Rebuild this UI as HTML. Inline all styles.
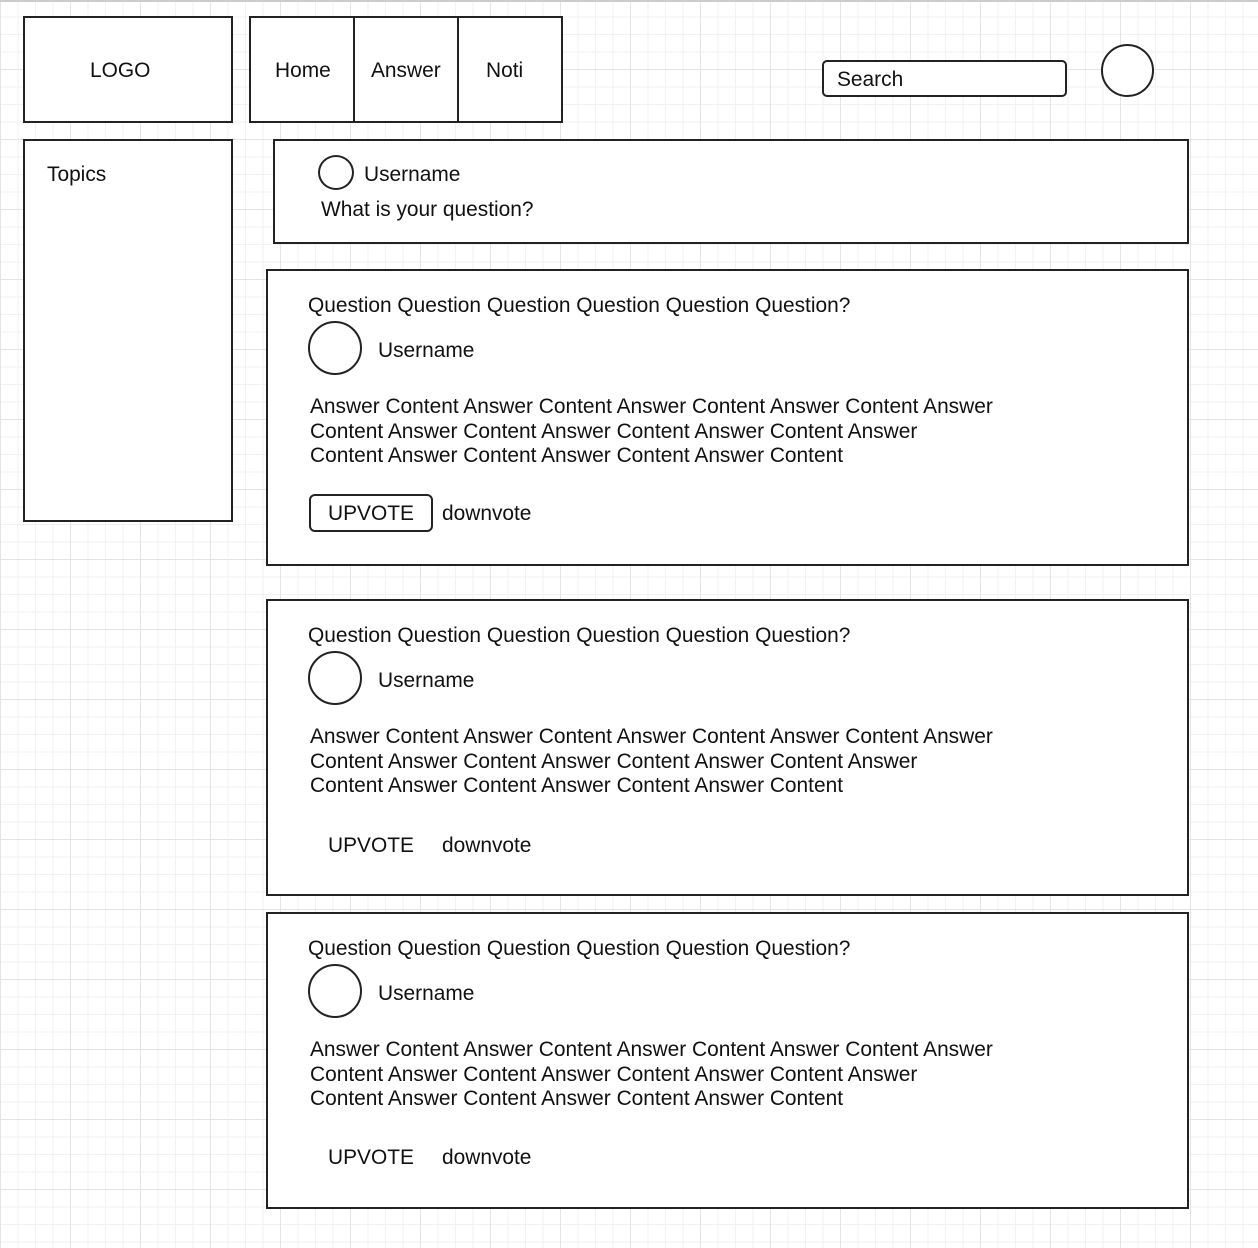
<!DOCTYPE html>
<html><head><meta charset="utf-8"><style>
*{margin:0;padding:0;box-sizing:border-box}
body{width:1258px;height:1248px;position:relative;overflow:hidden;background-color:#fff;
background-image:
linear-gradient(to right,#e4e4e4 1px,transparent 1px),
linear-gradient(to bottom,#e4e4e4 1px,transparent 1px),
linear-gradient(to right,#f2f2f2 1px,transparent 1px),
linear-gradient(to bottom,#f2f2f2 1px,transparent 1px);
background-size:70px 70px,70px 70px,17.5px 17.5px,17.5px 17.5px;
background-position:0 -1px,0 -1px,0 -1px,0 -1px;
font-family:"Liberation Sans",Arial,sans-serif;color:#111;font-size:20.9px}
.b{position:absolute;border:2px solid #222;background:#fff}
.t{position:absolute;white-space:nowrap;line-height:24.5px}
.c{position:absolute;border:2px solid #222;border-radius:50%;background:#fff}
</style></head><body>
<div style="position:absolute;left:0;top:0;width:1258px;height:2px;background:#ccc"></div>
<div class="b" style="left:23px;top:16px;width:210px;height:107px"></div>
<div class="t" style="left:90px;top:59px">LOGO</div>
<div class="b" style="left:249px;top:16px;width:314px;height:107px"></div>
<div style="position:absolute;left:353px;top:16px;width:2px;height:107px;background:#222"></div>
<div style="position:absolute;left:457px;top:16px;width:2px;height:107px;background:#222"></div>
<div class="t" style="left:275px;top:59px">Home</div>
<div class="t" style="left:371px;top:59px">Answer</div>
<div class="t" style="left:486px;top:59px">Noti</div>
<div class="b" style="left:822px;top:60px;width:245px;height:37px;border-radius:5px"></div>
<div class="t" style="left:837px;top:68px">Search</div>
<div class="c" style="left:1101px;top:44px;width:53px;height:53px"></div>

<div class="b" style="left:23px;top:139px;width:210px;height:383px"></div>
<div class="t" style="left:47px;top:163px">Topics</div>

<div class="b" style="left:273px;top:139px;width:916px;height:105px"></div>
<div class="c" style="left:318px;top:155px;width:36px;height:35px"></div>
<div class="t" style="left:364px;top:163px">Username</div>
<div class="t" style="left:321px;top:198px">What is your question?</div>

<div class="b" style="left:266px;top:269px;width:923px;height:297px"></div>
<div class="t" style="left:308px;top:294px">Question Question Question Question Question Question?</div>
<div class="c" style="left:308px;top:321px;width:54px;height:54px"></div>
<div class="t" style="left:378px;top:339px">Username</div>
<div class="t" style="left:310px;top:395px">Answer Content Answer Content Answer Content Answer Content Answer<br>Content Answer Content Answer Content Answer Content Answer<br>Content Answer Content Answer Content Answer Content</div>
<div class="b" style="left:309px;top:494px;width:124px;height:38px;border-radius:6px"></div>
<div class="t" style="left:328px;top:502px">UPVOTE</div>
<div class="t" style="left:442px;top:502px">downvote</div>

<div class="b" style="left:266px;top:599px;width:923px;height:297px"></div>
<div class="t" style="left:308px;top:624px">Question Question Question Question Question Question?</div>
<div class="c" style="left:308px;top:651px;width:54px;height:54px"></div>
<div class="t" style="left:378px;top:669px">Username</div>
<div class="t" style="left:310px;top:725px">Answer Content Answer Content Answer Content Answer Content Answer<br>Content Answer Content Answer Content Answer Content Answer<br>Content Answer Content Answer Content Answer Content</div>
<div class="t" style="left:328px;top:834px">UPVOTE</div>
<div class="t" style="left:442px;top:834px">downvote</div>

<div class="b" style="left:266px;top:912px;width:923px;height:297px"></div>
<div class="t" style="left:308px;top:937px">Question Question Question Question Question Question?</div>
<div class="c" style="left:308px;top:964px;width:54px;height:54px"></div>
<div class="t" style="left:378px;top:982px">Username</div>
<div class="t" style="left:310px;top:1038px">Answer Content Answer Content Answer Content Answer Content Answer<br>Content Answer Content Answer Content Answer Content Answer<br>Content Answer Content Answer Content Answer Content</div>
<div class="t" style="left:328px;top:1146px">UPVOTE</div>
<div class="t" style="left:442px;top:1146px">downvote</div>
</body></html>
